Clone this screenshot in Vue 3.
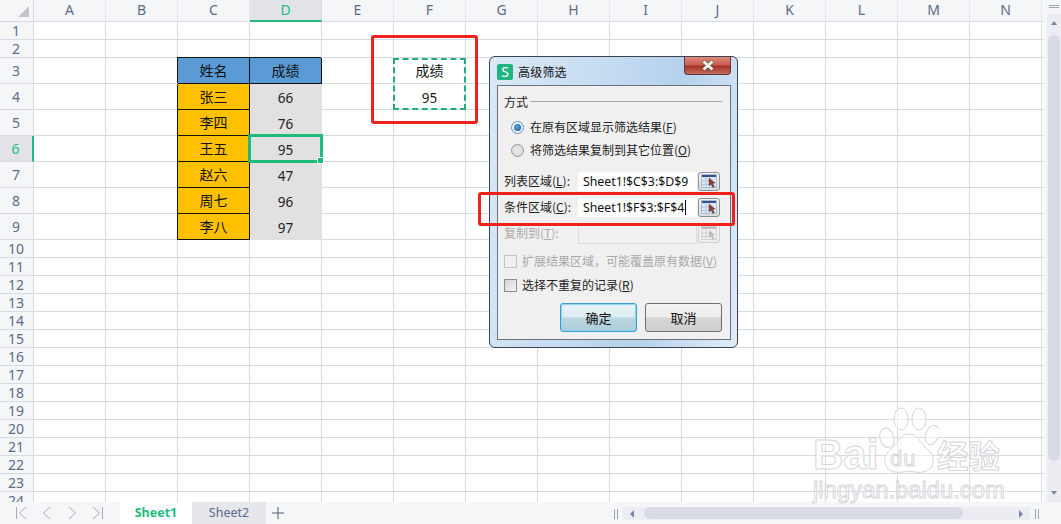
<script setup>
const cols = ['A','B','C','D','E','F','G','H','I','J','K','L','M','N']
const rowHeights = [18,18,26,26,26,26,26,26,26,18,18,18,18,18,18,18,18,18,18,18,18,18,18,18]
const cells = {
  'C3': { t: '姓名', c: 'hd' }, 'D3': { t: '成绩', c: 'hd' },
  'C4': { t: '张三', c: 'nm' }, 'D4': { t: '66', c: 'sc' },
  'C5': { t: '李四', c: 'nm' }, 'D5': { t: '76', c: 'sc' },
  'C6': { t: '王五', c: 'nm' }, 'D6': { t: '95', c: 'sc' },
  'C7': { t: '赵六', c: 'nm' }, 'D7': { t: '47', c: 'sc' },
  'C8': { t: '周七', c: 'nm' }, 'D8': { t: '96', c: 'sc' },
  'C9': { t: '李八', c: 'nm' }, 'D9': { t: '97', c: 'sc' },
  'F3': { t: '成绩', c: 'pl' }, 'F4': { t: '95', c: 'pl num' }
}
const cell = (col, row) => cells[col + row] || { t: '', c: '' }
const gridRows = rowHeights.map(h => h + 'px').join(' ')
</script>

<template>
  <div class="app">
    <div class="main">
      <div class="sheet" :style="{ gridTemplateRows: '22px ' + gridRows }">
        <div class="corner"><i></i></div>
        <div v-for="c in cols" :key="c" class="colh" :class="{ on: c === 'D' }">{{ c }}</div>
        <div class="colh stub"></div>
        <template v-for="(h, i) in rowHeights" :key="i">
          <div class="rowh" :class="{ on: i === 5 }">{{ i + 1 }}</div>
          <div v-for="c in cols" :key="c" class="cell" :class="cell(c, i + 1).c">{{ cell(c, i + 1).t }}</div>
          <div class="cell stubc"></div>
        </template>

        <div class="sel"><i></i></div>
        <div class="ants"></div>
        <div class="redbox one"></div>
      </div>
      <div class="vbar">
        <span class="vgrip"></span>
        <span class="up"></span>
        <span class="thumb"></span>
        <span class="dn"></span>
      </div>
    </div>

    <div class="tabs">
      <div class="nav">
        <svg width="16" height="16" viewBox="0 0 16 16"><path d="M3.500 2v12M13 2L6.500 8l6.500 6" /></svg>
        <svg width="16" height="16" viewBox="0 0 16 16"><path d="M11 2L4.500 8l6.500 6" /></svg>
        <svg width="16" height="16" viewBox="0 0 16 16"><path d="M4 2l6.500 6L4 14" /></svg>
        <svg width="16" height="16" viewBox="0 0 16 16"><path d="M11.500 2v12M2 2l6.500 6L2 14" /></svg>
      </div>
      <div class="tab active">Sheet1</div>
      <div class="tab">Sheet2</div>
      <svg class="plus" width="14" height="14" viewBox="0 0 14 14"><path d="M7 1v12M1 7h12" /></svg>
      <div class="hscroll">
        <span class="grip"></span>
        <div class="htrack">
          <span class="al"></span>
          <span class="hthumb"></span>
          <span class="ar"></span>
        </div>
        <span class="grip"></span>
      </div>
    </div>

    <div class="watermark">
      <span class="wm-bai">Bai</span>
      <svg class="paw" width="60" height="72" viewBox="0 0 60 72">
        <ellipse cx="9" cy="31" rx="7" ry="10" transform="rotate(-18 9 31)" />
        <ellipse cx="23" cy="12" rx="7" ry="11" />
        <ellipse cx="41" cy="12" rx="7" ry="11" />
        <ellipse cx="54" cy="28" rx="6.500" ry="10" transform="rotate(18 54 28)" />
        <path d="M31 27c9 0 11 9 17 14 6 5 8 9 7 15-2 9-11 11-24 8-13 3-22 1-24-8-1-6 1-10 7-15 6-5 8-14 17-14z" />
      </svg>
      <span class="wm-du">du</span>
      <span class="wm-cn">经验</span>
      <span class="wm-url">jingyan.baidu.com</span>
    </div>

    <div class="dialog">
      <div class="titlebar">
        <span class="logo">S</span>
        <span class="title">高级筛选</span>
        <span class="close">
          <svg width="14" height="11" viewBox="0 0 14 11"><path d="M2.500 1.500l9 8M11.500 1.500l-9 8" /></svg>
        </span>
      </div>
      <div class="panel">
        <div class="legend"><span>方式</span><i></i></div>
        <label class="opt first"><span class="radio on"></span>在原有区域显示筛选结果(<u>F</u>)</label>
        <label class="opt"><span class="radio"></span>将筛选结果复制到其它位置(<u>O</u>)</label>

        <div class="field f1">
          <span class="lab">列表区域(<u>L</u>):</span>
          <span class="inp">Sheet1!$C$3:$D$9</span>
          <span class="pick">
            <svg width="16" height="14" viewBox="0 0 16 14"><rect x="0.500" y="0.500" width="15" height="13" fill="#dce8f8" stroke="#a9bbd3"/><rect x="1" y="1" width="14" height="2" fill="#35508c"/><path d="M1 7h7M1 10.500h7M5 3v10" stroke="#b3c4dc" fill="none"/><path d="M8 4v8l2-1.800 1.800 3.300 1.600-.9-1.800-3.100 2.600-.5z" fill="#8f3f32" stroke="#3a3a3a" stroke-width=".4"/></svg>
          </span>
        </div>
        <div class="field">
          <span class="lab">条件区域(<u>C</u>):</span>
          <span class="inp">Sheet1!$F$3:$F$4<b class="caret"></b></span>
          <span class="pick">
            <svg width="16" height="14" viewBox="0 0 16 14"><rect x="0.500" y="0.500" width="15" height="13" fill="#dce8f8" stroke="#a9bbd3"/><rect x="1" y="1" width="14" height="2" fill="#35508c"/><path d="M1 7h7M1 10.500h7M5 3v10" stroke="#b3c4dc" fill="none"/><path d="M8 4v8l2-1.800 1.800 3.300 1.600-.9-1.800-3.100 2.600-.5z" fill="#8f3f32" stroke="#3a3a3a" stroke-width=".4"/></svg>
          </span>
        </div>
        <div class="field off">
          <span class="lab">复制到(<u>T</u>):</span>
          <span class="inp dis"></span>
          <span class="pick">
            <svg width="16" height="14" viewBox="0 0 16 14"><rect x="0.500" y="0.500" width="15" height="13" fill="#eee" stroke="#d2d2d2"/><rect x="1" y="1" width="14" height="2" fill="#bbb"/><path d="M1 7h7M1 10.500h7M5 3v10" stroke="#d2d2d2" fill="none"/><path d="M8 4v8l2-1.800 1.800 3.300 1.600-.9-1.800-3.100 2.600-.5z" fill="#bbb"/></svg>
          </span>
        </div>
        <label class="chk off c1"><span class="box"></span>扩展结果区域，可能覆盖原有数据(<u>V</u>)</label>
        <label class="chk c2"><span class="box"></span>选择不重复的记录(<u>R</u>)</label>
        <div class="btns">
          <button class="btn primary">确定</button>
          <button class="btn">取消</button>
        </div>
      </div>
    </div>

    <div class="redbox two"></div>
  </div>
</template>

<style>
html, body { margin: 0; padding: 0; background: #fff; overflow: hidden; }
</style>

<style scoped>
.app {
  position: relative;
  width: 1061px;
  height: 524px;
  overflow: hidden;
  font-family: "Noto Sans", "Noto Sans CJK SC", sans-serif;
  background: #f5f6f8;
}
.main { display: flex; height: 502px; overflow: hidden; }
.sheet {
  position: relative;
  display: grid;
  grid-template-columns: 34px repeat(14, 72px) 2px;
  width: 1044px;
  flex: none;
  align-content: start;
  height: 502px;
  overflow: hidden;
  background: #fff;
}
.corner { background: #f5f6f8; border-right: 1px solid #d6dae5; border-bottom: 1px solid #d6dae5; position: relative; box-sizing: border-box; }
.corner i {
  position: absolute; left: 18px; top: 6px; width: 0; height: 0;
  border-style: solid; border-width: 0 0 11px 11px;
  border-color: transparent transparent #c4c6cb transparent;
}
.colh {
  box-sizing: border-box;
  background: #f5f6f8;
  border-right: 1px solid #e6e8ee;
  border-bottom: 1px solid #d6dae5;
  color: #5d6b8b;
  font: 14px/20px "Noto Sans", sans-serif;
  text-align: center;
}
.colh.on { background: #e1e3e9; color: #1fbb7d; border-bottom: 2px solid #1fbb7d; border-right-color: #d6dae5; }
.colh.stub { border-right: 0; }
.rowh {
  box-sizing: border-box;
  background: #f5f6f8;
  border-right: 1px solid #d6dae5;
  border-bottom: 1px solid #d6dae5;
  color: #5d6b8b;
  font: 14px/17px "Noto Sans", sans-serif;
  text-align: center;
  padding-right: 1px;
  display: flex;
  align-items: center;
  justify-content: center;
}
.rowh.on { background: #e1e3e9; color: #1fbb7d; border-right: 2px solid #1fbb7d; }
.cell {
  box-sizing: border-box;
  border-right: 1px solid #d6dae5;
  border-bottom: 1px solid #d6dae5;
  color: #111;
  font: 14px/1 "Noto Sans CJK SC", sans-serif;
  display: flex;
  align-items: center;
  justify-content: center;
  padding-bottom: 2px;
}
.cell.stubc { border-right: 0; }
.cell.hd { background: #5b9bd5; border-right: 1px solid #111; border-bottom: 1px solid #111; box-shadow: -1px -1px 0 #111; position: relative; }
.cell.nm { background: #ffc000; border-right: 1px solid #111; border-bottom: 1px solid #111; box-shadow: -1px 0 0 #111; position: relative; }
.cell.sc { background: #e1e1e1; border-right-color: #e1e1e1; border-bottom-color: #e1e1e1; font: 13.500px/1 "Noto Sans", sans-serif; padding: 4px 0 0; color: #222; }
.cell.num { font: 13.500px/1 "Noto Sans", sans-serif; padding: 4px 0 0; color: #222; }
.sel {
  position: absolute;
  left: 248px; top: 134px;
  width: 75px; height: 29px;
  box-sizing: border-box;
  border: 3px solid #1fbb7d;
  pointer-events: none;
}
.sel i {
  position: absolute; right: -4px; bottom: -4px;
  width: 5px; height: 5px; background: #1fbb7d; border: 1px solid #fff;
  box-sizing: content-box;
}
.ants {
  position: absolute;
  left: 393px; top: 58px;
  width: 73px; height: 52px;
  box-sizing: border-box;
  border: 2px dashed #1fae78;
}
.redbox {
  position: absolute;
  box-sizing: border-box;
  border: 3px solid #f0211a;
  border-radius: 3px;
  pointer-events: none;
}
.redbox.one { left: 371px; top: 35px; width: 107px; height: 89px; }
.redbox.two { left: 478px; top: 192px; width: 257px; height: 34px; }

.vbar {
  position: relative;
  flex: 1;
  background: #f5f6f8;
  border-left: 3px solid #f5f6f8;
}
.vbar::before {
  content: ""; position: absolute; inset: 14px 0 0 0; background: #ebedf3;
}
.vgrip {
  position: absolute; left: 2px; top: 5px; width: 10px; height: 1px;
  border-top: 1px solid #9aa3b8; border-bottom: 1px solid #9aa3b8;
}
.vbar .thumb {
  position: absolute; left: 1px; right: 1px; top: 35px; height: 426px;
  background: #d8dbe4; border-radius: 6px;
}
.vbar .up, .vbar .dn {
  position: absolute; left: 4px; width: 0; height: 0;
  border-left: 3px solid transparent; border-right: 3px solid transparent;
}
.vbar .up { top: 21px; border-bottom: 4px solid #7a86a3; z-index: 1; }
.vbar .dn { top: 491px; border-top: 4px solid #7a86a3; z-index: 1; }

.tabs {
  height: 22px;
  display: flex;
  align-items: stretch;
  background: #f5f6f8;
  box-sizing: border-box;
}
.nav { width: 120px; display: flex; align-items: center; padding-left: 13px; box-sizing: border-box; gap: 10px; flex: none; }
.nav svg { fill: none; stroke: #a9abb0; stroke-width: 1; flex: none; }
.tab {
  width: 74px;
  text-align: center;
  font: 12.500px/22px "Noto Sans", sans-serif;
  color: #5d6b8b;
  background: #e5e7ec;
}
.tab.active { width: 72px; background: #fff; color: #1fbb7d; font-weight: 700; }
.plus { align-self: center; margin-left: 5px; fill: none; stroke: #4e5a74; stroke-width: 1; }
.hscroll {
  position: absolute; left: 614px; right: 22px; top: 507px; height: 13px;
  display: flex; align-items: center; gap: 5px;
}
.grip { width: 2px; height: 10px; border-left: 1px solid #9aa3b8; border-right: 1px solid #9aa3b8; flex: none; }
.htrack {
  position: relative;
  flex: 1; height: 13px; background: #ebedf3;
}
.hthumb { position: absolute; left: 21px; width: 319px; top: 0; height: 12px; background: #d8dbe4; border-radius: 6px; }
.al, .ar { position: absolute; top: 3px; width: 0; height: 0; border-top: 4px solid transparent; border-bottom: 4px solid transparent; }
.al { left: 7px; border-right: 4px solid #7a86a3; }
.ar { right: 7px; border-left: 4px solid #7a86a3; }

.watermark {
  position: absolute; left: 812px; top: 420px; width: 230px; height: 84px; pointer-events: none;
}
.wm-bai, .wm-du, .wm-cn, .wm-url {
  position: absolute;
  color: rgba(255,255,255,.6);
  -webkit-text-stroke: 1px #d6d6da;
  font-family: "Liberation Sans", sans-serif;
  white-space: nowrap;
}
.wm-bai { left: 1px; top: 17px; font-size: 42px; line-height: 36px; font-weight: 700; letter-spacing: 0; }
.paw { position: absolute; left: 66px; top: -13px; fill: rgba(255,255,255,.55); stroke: #d6d6da; stroke-width: 1; }
.wm-du { left: 78px; top: 26px; font-size: 22px; line-height: 26px; letter-spacing: 1px; }
.wm-cn { left: 125px; top: 16px; font-family: "Noto Sans CJK SC", sans-serif; font-size: 31.500px; line-height: 36px; font-weight: 700; }
.wm-url { left: 1px; top: 58px; font-size: 23.800px; line-height: 24px; }

.dialog {
  position: absolute;
  left: 489px; top: 56px;
  width: 249px; height: 292px;
  box-sizing: border-box;
  border: 1px solid #3c4450;
  border-radius: 6px;
  background: linear-gradient(100deg, #dbe9f6 0%, #c2daf1 45%, #b5d1ec 65%, #dfecf8 100%);
  padding: 0 6px 7px 7px;
  display: flex;
  flex-direction: column;
  font: 12px/16px "Noto Sans CJK SC", sans-serif;
  color: #222;
}
.titlebar { position: relative; height: 28px; flex: none; display: flex; align-items: center; }
.logo {
  width: 16px; height: 16px; margin-left: 0; margin-top: 1px;
  background: #1fb57f; color: #fff; border-radius: 2px;
  font: 400 14px/16px "Noto Sans", sans-serif; text-align: center;
}
.title { margin-left: 5px; font-size: 12px; letter-spacing: .2px; color: #111; margin-top: 1px; }
.close {
  position: absolute; right: 0; top: 0;
  width: 47px; height: 18px;
  box-sizing: border-box;
  border: 1px solid #5e3a3a; border-top: 0;
  border-radius: 0 0 4px 4px;
  background: linear-gradient(#dd8a7c 0%, #c8604f 45%, #a83324 55%, #c26d5e 100%);
  display: flex; align-items: center; justify-content: center;
}
.close svg { fill: none; stroke: #f1f1f1; stroke-width: 3; filter: drop-shadow(0 0 1px #444); }
.panel {
  flex: 1;
  background: #f0f0f0;
  border: 1px solid #69727e;
  box-sizing: border-box;
  display: flex;
  flex-direction: column;
  padding: 0 8px 0 6px;
  min-height: 0;
}
.legend { display: flex; align-items: center; margin-top: 8px; height: 16px; font-size: 12px; }
.legend i { flex: 1; height: 1px; background: #a9a9a9; margin-left: 2px; margin-top: -1px; }
.opt { display: flex; align-items: center; height: 16px; font-size: 12px; padding-left: 8px; }
.opt.first { margin-top: 9px; margin-bottom: 7px; }
.radio {
  width: 11px; height: 11px; border-radius: 50%;
  border: 1px solid #8f9aa6;
  background: radial-gradient(circle, #e6e6e6 0 30%, #d0d0d0 100%);
  margin-right: 6px; margin-left: -1px;
  position: relative; flex: none;
}
.radio.on { border-color: #6b93b8; background: #e9f2fa; }
.radio.on::after {
  content: ""; position: absolute; left: 2px; top: 2px; width: 7px; height: 7px;
  border-radius: 50%; background: radial-gradient(circle at 40% 40%, #5fa6dc, #164c85);
}
.field { display: flex; align-items: center; height: 20px; margin-bottom: 6px; }
.field.f1 { margin-top: 13px; }
.lab { width: 74px; flex: none; font-size: 12px; white-space: nowrap; }
.inp {
  width: 119px; height: 19px; flex: none;
  background: #fff; box-sizing: border-box; padding-left: 5px;
  font: 12.300px/19px "Noto Sans", sans-serif; color: #111;
  display: flex; align-items: center; white-space: nowrap;
}
.inp.dis { background: #f0f0f0; border: 1px solid #dcdcdc; height: 21px; }
.caret { width: 1px; height: 15px; background: #111; margin-left: 1px; display: inline-block; }
.pick {
  width: 22px; height: 19px; margin-left: 1px; box-sizing: border-box; flex: none;
  border: 1px solid #8a8f96; border-radius: 3px;
  background: linear-gradient(#f6f6f6, #dcdcdc);
  display: flex; align-items: center; justify-content: center;
}
.off { color: #a8a8a8; }
.off .pick { border-color: #cfcfcf; background: #f0f0f0; }
.chk { display: flex; align-items: center; height: 16px; font-size: 12px; white-space: nowrap; }
.chk.c1 { margin-top: 4px; }
.chk.c2 { margin-top: 8px; }
.box {
  width: 11px; height: 11px; border: 1px solid #8e8f8f; margin-right: 5px; flex: none;
  background: linear-gradient(135deg, #d4d4d4, #f4f4f4);
}
.off .box { border-color: #c5c5c5; background: #f0f0f0; }
.btns { display: flex; justify-content: flex-end; gap: 8px; margin-top: 10px; }
.btn {
  width: 77px; height: 29px; padding: 0;
  border: 1px solid #707070; border-radius: 3px;
  background: linear-gradient(#f4f4f4 0%, #ececec 48%, #d6d6d6 52%, #cfcfcf 100%);
  font: 13px/1 "Noto Sans CJK SC", sans-serif; color: #111;
}
.btn.primary {
  border-color: #3c9bd0;
  box-shadow: inset 0 0 0 1px #8fd6f3;
  background: linear-gradient(#e8f3f8 0%, #dcecf3 48%, #bcd6e2 52%, #acccdb 100%);
}
</style>
